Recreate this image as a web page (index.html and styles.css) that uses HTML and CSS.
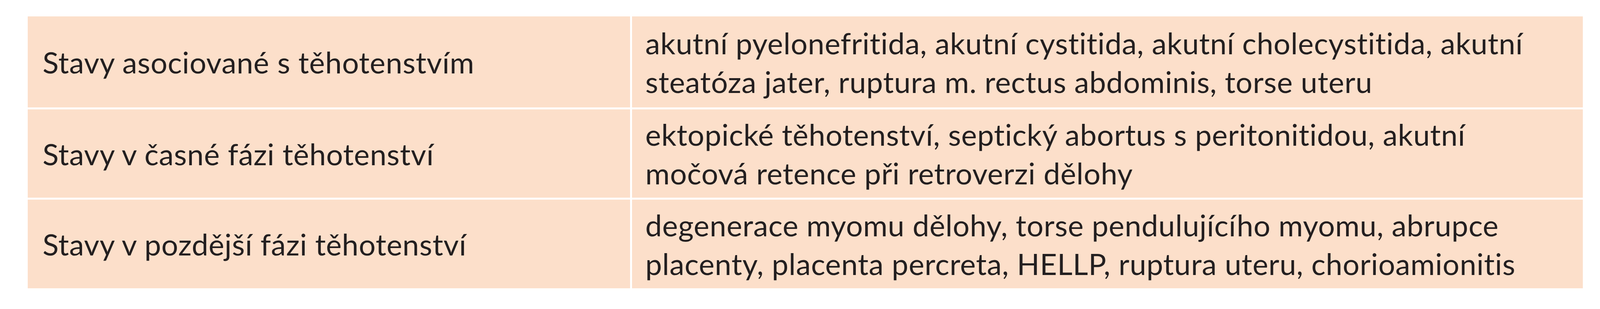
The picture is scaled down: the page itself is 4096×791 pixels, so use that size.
FILE: index.html
```html
<!DOCTYPE html>
<html lang="cs">
<head>
<meta charset="utf-8">
<title>Stavy</title>
<link rel="stylesheet" href="styles.css">
</head>
<body>
<div class="page">
  <div class="table">
    <div class="cell label">Stavy asociované s těhotenstvím</div>
    <div class="cell desc">akutní pyelonefritida, akutní cystitida, akutní cholecystitida, akutní<br>steatóza jater, ruptura m. rectus abdominis, torse uteru</div>
    <div class="cell label">Stavy v časné fázi těhotenství</div>
    <div class="cell desc">ektopické těhotenství, septický abortus s peritonitidou, akutní<br>močová retence při retroverzi dělohy</div>
    <div class="cell label">Stavy v pozdější fázi těhotenství</div>
    <div class="cell desc">degenerace myomu dělohy, torse pendulujícího myomu, abrupce<br>placenty, placenta percreta, HELLP, ruptura uteru, chorioamionitis</div>
  </div>
</div>
</body>
</html>
```

FILE: styles.css
```css
html, body {
  margin: 0;
  padding: 0;
  background: #ffffff;
}
.page {
  padding: 42px 0 0 71px;
}
.table {
  display: grid;
  grid-template-columns: 1542px 2434px;
  grid-template-rows: 233px 226px 227px;
  gap: 5px;
  width: 3981px;
  background: #ffffff;
}
.cell {
  background: #fcdfca;
  display: flex;
  align-items: center;
  font-family: Lato, "Open Sans", sans-serif;
  font-size: 76px;
  letter-spacing: 0.75px;
  line-height: 99px;
  color: #231f20;
  white-space: nowrap;
}
.label {
  padding-left: 38px;
}
.desc {
  padding-left: 34px;
}
```
